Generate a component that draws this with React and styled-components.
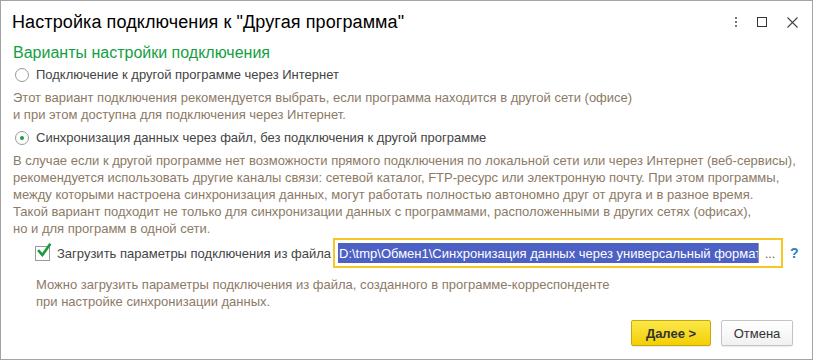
import React, { useState } from "react";
import styled, { createGlobalStyle } from "styled-components";

const GlobalStyle = createGlobalStyle`
  html, body {
    margin: 0;
    padding: 0;
    background: #ffffff;
  }
  body {
    font-family: "Liberation Sans", Arial, sans-serif;
  }
`;

export default function App() {
  const [mode, setMode] = useState("file");
  const [loadFromFile, setLoadFromFile] = useState(true);

  return (
    <>
      <GlobalStyle />
      <Window>
        <TitleBar>
          <Title>Настройка подключения к "Другая программа"</Title>
          <TitleActions>
            <MoreIcon>
              <span />
              <span />
              <span />
            </MoreIcon>
            <svg width="10" height="10" viewBox="0 0 10 10">
              <rect x="0.5" y="0.5" width="9" height="9" fill="none" stroke="#333" strokeWidth="1" />
            </svg>
            <svg width="11" height="11" viewBox="0 0 11 11">
              <path d="M0.5 0.5 L10.5 10.5 M10.5 0.5 L0.5 10.5" stroke="#444" strokeWidth="1.1" />
            </svg>
          </TitleActions>
        </TitleBar>

        <Content>
          <SectionTitle>Варианты настройки подключения</SectionTitle>

          <RadioRow onClick={() => setMode("internet")}>
            <Radio checked={mode === "internet"} />
            <Label>Подключение к другой программе через Интернет</Label>
          </RadioRow>
          <Note $top={6}>
            Этот вариант подключения рекомендуется выбрать, если программа находится в другой сети (офисе)
            <br />и при этом доступна для подключения через Интернет.
          </Note>

          <RadioRow $top={6} onClick={() => setMode("file")}>
            <Radio checked={mode === "file"} />
            <Label>Синхронизация данных через файл, без подключения к другой программе</Label>
          </RadioRow>
          <Note $top={6}>
            В случае если к другой программе нет возможности прямого подключения по локальной сети или через Интернет (веб-сервисы),
            <br />рекомендуется использовать другие каналы связи: сетевой каталог, FTP-ресурс или электронную почту. При этом программы,
            <br />между которыми настроена синхронизация данных, могут работать полностью автономно друг от друга и в разное время.
            <br />Такой вариант подходит не только для синхронизации данных с программами, расположенными в других сетях (офисах),
            <br />но и для программ в одной сети.
          </Note>

          <FileRow>
            <CheckLabel onClick={() => setLoadFromFile(!loadFromFile)}>
              <CheckBox>
                {loadFromFile && (
                  <svg width="16" height="16" viewBox="0 0 16 16">
                    <path d="M3 8.2 L6.4 12 L13.6 1.8" fill="none" stroke="#1a9a3c" strokeWidth="2.6" strokeLinecap="square" />
                  </svg>
                )}
              </CheckBox>
              <Label>Загрузить параметры подключения из файла</Label>
            </CheckLabel>
            <PathField>
              <PathText>
                <Selected>D:\tmp\Обмен1\Синхронизация данных через универсальный формат</Selected>
              </PathText>
              <PickButton>...</PickButton>
            </PathField>
            <Help>?</Help>
          </FileRow>

          <Note $indent={23} $top={8}>
            Можно загрузить параметры подключения из файла, созданного в программе-корреспонденте
            <br />при настройке синхронизации данных.
          </Note>
        </Content>

        <Footer>
          <Button $primary>Далее &gt;</Button>
          <Button>Отмена</Button>
        </Footer>
      </Window>
    </>
  );
}

function Radio({ checked }) {
  return (
    <RadioCircle>
      {checked && <RadioDot />}
    </RadioCircle>
  );
}

const Window = styled.div`
  width: 813px;
  height: 360px;
  box-sizing: border-box;
  border: 1px solid #a3a3a3;
  display: flex;
  flex-direction: column;
  background: #fff;
  overflow: hidden;
`;

const TitleBar = styled.div`
  display: flex;
  align-items: center;
  justify-content: space-between;
  height: 40px;
  padding: 2px 14px 0 11px;
  box-sizing: border-box;
`;

const Title = styled.div`
  font-size: 18px;
  color: #000;
  letter-spacing: 0.1px;
`;

const TitleActions = styled.div`
  display: flex;
  align-items: center;
  gap: 20px;
`;

const MoreIcon = styled.div`
  display: flex;
  flex-direction: column;
  gap: 2px;
  span {
    width: 2px;
    height: 2px;
    background: #777;
  }
`;

const Content = styled.div`
  flex: 1;
  display: flex;
  flex-direction: column;
  padding: 0 12px;
`;

const SectionTitle = styled.div`
  font-size: 16px;
  color: #13a042;
  margin-top: 2px;
  line-height: 20px;
`;

const RadioRow = styled.div`
  display: flex;
  align-items: center;
  gap: 7px;
  margin-top: ${(p) => p.$top || 3}px;
  margin-left: 2px;
  cursor: pointer;
`;

const RadioCircle = styled.span`
  width: 12px;
  height: 12px;
  border: 1px solid #9a9a9a;
  border-radius: 50%;
  display: flex;
  align-items: center;
  justify-content: center;
  background: #fff;
`;

const RadioDot = styled.span`
  width: 4px;
  height: 4px;
  border-radius: 50%;
  background: #13a042;
`;

const Label = styled.span`
  font-size: 13px;
  color: #444;
  line-height: 17px;
`;

const Note = styled.div`
  font-size: 13px;
  line-height: 17px;
  color: #8c7a66;
  margin-top: ${(p) => p.$top || 0}px;
  margin-left: ${(p) => p.$indent || 0}px;
`;

const FileRow = styled.div`
  display: flex;
  align-items: center;
  margin-top: 1px;
  margin-left: 22px;
`;

const CheckLabel = styled.div`
  display: flex;
  align-items: center;
  gap: 7px;
  width: 298px;
  cursor: pointer;
`;

const CheckBox = styled.span`
  position: relative;
  width: 13px;
  height: 13px;
  border: 1px solid #9a9a9a;
  background: #fff;
  svg {
    position: absolute;
    left: 0;
    top: -4px;
  }
`;

const PathField = styled.div`
  display: flex;
  align-items: stretch;
  width: 450px;
  height: 30px;
  box-sizing: border-box;
  border: 2px solid #f5c824;
  background: #fff;
`;

const PathText = styled.div`
  flex: 1;
  overflow: hidden;
  white-space: nowrap;
  padding: 3px 0 3px 3px;
  display: flex;
  align-items: stretch;
`;

const Selected = styled.span`
  background: #4d60c3;
  color: #fff;
  font-size: 13px;
  line-height: 22px;
  padding-left: 1px;
`;

const PickButton = styled.div`
  width: 22px;
  border-left: 1px solid #9a9a9a;
  margin: 3px 0;
  font-size: 12px;
  color: #555;
  display: flex;
  align-items: center;
  justify-content: center;
  padding-top: 2px;
`;

const Help = styled.span`
  margin-left: 7px;
  font-size: 14px;
  font-weight: bold;
  color: #2a7fc4;
`;

const Footer = styled.div`
  display: flex;
  justify-content: flex-end;
  gap: 10px;
  padding: 0 19px 13px 0;
`;

const Button = styled.button`
  height: 26px;
  box-sizing: border-box;
  padding: 0;
  width: ${(p) => (p.$primary ? 80 : 72)}px;
  font-family: "Liberation Sans", Arial, sans-serif;
  font-size: 13px;
  font-weight: ${(p) => (p.$primary ? "bold" : "normal")};
  color: #333;
  border-radius: 2px;
  border: 1px solid ${(p) => (p.$primary ? "#c9a80a" : "#c4c4c4")};
  background: ${(p) =>
    p.$primary
      ? "linear-gradient(#fbe84a, #f3cf05)"
      : "linear-gradient(#ffffff, #f1f1f1)"};
  box-shadow: 0 1px 1px rgba(0, 0, 0, 0.08);
  cursor: pointer;
`;
